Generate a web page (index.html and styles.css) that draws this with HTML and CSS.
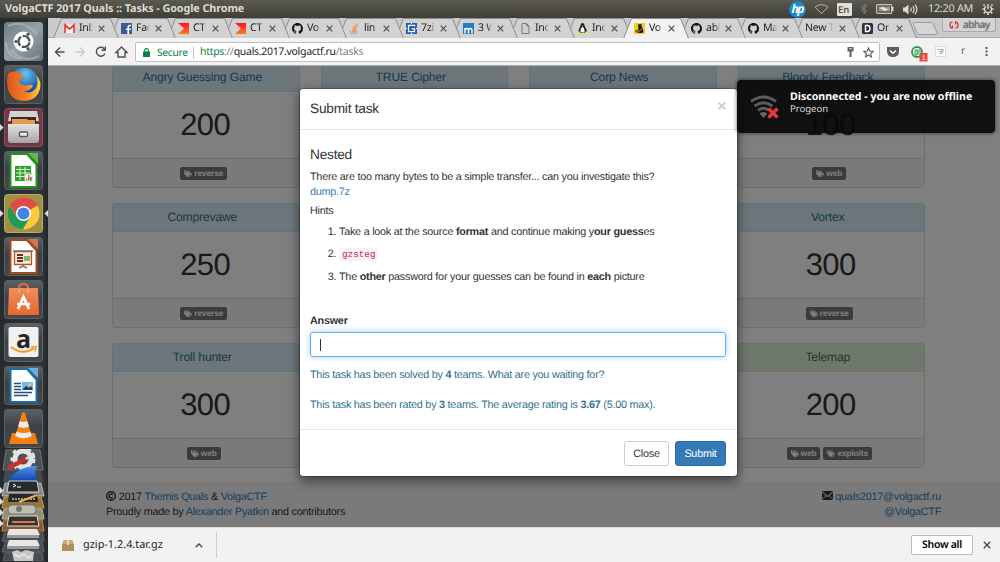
FILE: index.html
```html
<!DOCTYPE html>
<html lang="en">
<head>
<meta charset="utf-8">
<title>VolgaCTF 2017 Quals :: Tasks</title>
<link rel="stylesheet" href="styles.css">
</head>
<body>
<svg class="defs" width="0" height="0" aria-hidden="true">
  <defs>
    <linearGradient id="tileShade" x1="0" y1="0" x2="0" y2="1"><stop offset="0" stop-color="#5d6163"/><stop offset=".45" stop-color="#3c4143"/><stop offset="1" stop-color="#43484a"/></linearGradient>
    <linearGradient id="dashShade" x1="0" y1="0" x2="1" y2="1"><stop offset="0" stop-color="#6d7a80"/><stop offset=".5" stop-color="#95a2a7"/><stop offset="1" stop-color="#66747a"/></linearGradient>
    <linearGradient id="steel" x1="0" y1="0" x2="0" y2="1"><stop offset="0" stop-color="#e4e4e2"/><stop offset="1" stop-color="#a5a5a3"/></linearGradient>
    <linearGradient id="bag" x1="0" y1="0" x2="0" y2="1"><stop offset="0" stop-color="#f08d5c"/><stop offset="1" stop-color="#e6682f"/></linearGradient>
    <linearGradient id="fin" x1="0" y1="0" x2="0" y2="1"><stop offset="0" stop-color="#4f93ea"/><stop offset="1" stop-color="#0c3fae"/></linearGradient>
    <radialGradient id="globe" cx=".55" cy=".2" r=".8"><stop offset="0" stop-color="#6cc6f2"/><stop offset=".6" stop-color="#1d62ad"/><stop offset="1" stop-color="#0a2c6a"/></radialGradient>
    <linearGradient id="fox" x1="0" y1="0" x2="1" y2="0"><stop offset="0" stop-color="#e2531d"/><stop offset=".6" stop-color="#f3842a"/><stop offset="1" stop-color="#fbd340"/></linearGradient>
    <linearGradient id="volga" x1="0" y1="0" x2="0" y2="1"><stop offset="0" stop-color="#ff1030"/><stop offset="1" stop-color="#ff7a1c"/></linearGradient>
    <symbol id="tab" viewBox="0 0 66 20"><path d="M.5 20.5 8.500.5H57.500L65.500 20.500" stroke="#8e8e8e"/></symbol>
    <symbol id="x" viewBox="0 0 7 7"><path d="M.7.7 6.300 6.300M6.300.7.7 6.300" stroke="#4c4c4c" stroke-width="1.200" fill="none"/></symbol>
    <symbol id="github" viewBox="0 0 16 16"><path fill="#111" d="M8 0C3.580 0 0 3.580 0 8c0 3.540 2.290 6.530 5.470 7.590.4.070.550-.170.550-.380 0-.190-.010-.820-.010-1.490-2.010.370-2.530-.490-2.690-.940-.090-.230-.480-.940-.820-1.130-.280-.150-.680-.520-.010-.530.630-.010 1.080.580 1.230.820.720 1.210 1.870.870 2.330.660.070-.520.280-.870.510-1.070-1.780-.2-3.640-.890-3.640-3.950 0-.870.310-1.590.820-2.150-.080-.2-.360-1.020.080-2.120 0 0 .670-.210 2.200.820.640-.180 1.320-.270 2-.270s1.360.090 2 .270c1.530-1.040 2.200-.820 2.200-.820.440 1.100.160 1.920.080 2.120.510.560.820 1.270.820 2.150 0 3.070-1.870 3.750-3.650 3.950.290.250.540.730.540 1.480 0 1.070-.010 1.930-.010 2.200 0 .210.150.460.550.380A8 8 0 0 0 16 8c0-4.420-3.580-8-8-8z"/></symbol>
    <symbol id="ctf" viewBox="0 0 11 11"><path fill="url(#volga)" d="M0 0h11v11H0l6-5.500z"/></symbol>
    <symbol id="tag" viewBox="0 0 8 8"><path fill="#fff" fill-rule="evenodd" d="M0 .5h3L6.300 3.800q.4.400 0 .8L4 7q-.4.400-.8 0L0 3.500zM1.600 1.300a.7.7 0 1 0 .1 0zM4 .5h.7L7.900 3.700q.4.400 0 .8L5.500 7.200 5 6.700 7 4.200z"/></symbol>
    <symbol id="tile" viewBox="0 0 39 39"><rect x=".5" y=".5" width="38" height="38" rx="3" fill="url(#tileShade)" stroke="#5b6062"/></symbol>
    <symbol id="doc" viewBox="0 0 28 35"><path d="M0 0H20L28 9V35H0z"/><path d="M2 2H17L26 12V33H2z" fill="#fff"/></symbol>
  </defs>
</svg>

<header class="panel">
  <span class="panel-title">VolgaCTF 2017 Quals :: Tasks - Google Chrome</span>
  <div class="indicators">
    <svg class="hp" width="17" height="17" viewBox="0 0 17 17"><circle cx="8.500" cy="8.500" r="8.300" fill="#0f8fce"/><text x="2.600" y="12.200" class="hp-text">hp</text></svg>
    <svg width="15" height="12" viewBox="0 0 15 12"><path d="M7.500 10.500 1 4.200Q7.500-1 14 4.200z" fill="none" stroke="#b9b5aa"/></svg>
    <span class="lang">En</span>
    <svg width="8" height="12" viewBox="0 0 8 12"><path d="M1 3.500 6.500 8.500 4 11V1L6.500 3.500 1 8.500" fill="none" stroke="#85827a"/></svg>
    <svg width="18" height="10" viewBox="0 0 18 10"><rect x=".6" y=".6" width="15" height="8.800" rx="1" fill="none" stroke="#c9c5bc" stroke-width="1.200"/><path d="M16 3h1.500v4H16z" fill="#dfdbd2"/><path d="M2.500 2.500h11.500v5H2.500z" fill="#99958b"/><path d="M3 4 8 3l1 1.500 4 .5-5 2-1-1.500z" fill="#f5f2e9"/></svg>
    <svg width="15" height="11" viewBox="0 0 15 11"><path d="M0 3.500h2L5.500.5v10L2 7.500H0z" fill="#dfdbd2"/><path d="M7.500 3.500q1.500 2 0 4M9.700 2q2.700 3.500 0 7M11.900.7q4 4.800 0 9.600" fill="none" stroke="#dfdbd2" stroke-width="1.200"/></svg>
    <span class="clock">12:20 AM</span>
    <svg width="12" height="12" viewBox="0 0 12 12"><path d="M3.900 3.400a3.500 3.500 0 1 0 4.200 0M6 1v5" fill="none" stroke="#dfdbd2" stroke-width="1.400"/><path d="M2.600 2.600 1.500 1.500M9.400 2.600l1.100-1.100M1.800 6H.2M10.200 6h1.600M2.900 9.100l-1.200 1.200M9.100 9.100l1.200 1.200M6 10.300v1.600" stroke="#dfdbd2" stroke-width="1.700"/></svg>
  </div>
</header>

<div class="desktop">
  <nav class="launcher">
    <svg class="app" viewBox="0 0 39 39"><rect width="39" height="39" rx="3.500" fill="url(#dashShade)"/><path d="M4 4Q20-3 33 12M35 34Q20 42 7 28M2 20Q2 34 17 37" fill="none" stroke="#b4bfc3" stroke-width="2" opacity=".6"/><circle cx="19.500" cy="19.500" r="10" fill="#fff"/><circle cx="20" cy="19.500" r="5.500" fill="none" stroke="#4a4f52" stroke-width="2.200" stroke-dasharray="9.900 1.600" stroke-dashoffset="-.8"/><circle cx="12" cy="19.500" r="1.600" fill="#4a4f52"/><circle cx="24" cy="12.300" r="1.600" fill="#4a4f52"/><circle cx="24" cy="26.700" r="1.600" fill="#4a4f52"/></svg>
    <svg class="app" viewBox="0 0 39 39"><use href="#tile"/><circle cx="20" cy="18" r="15" fill="url(#globe)"/><path d="M4 9q2-3 5-2 5-2 7 2l5 3-5 2q-2 3 1 5 4 3 8 1 3-1 4 1-4 6-10 5 8 4 13-3 3-6 0-13 6 6 4 14-3 11-15 12Q7 36 4 24q-2-8 0-15z" fill="url(#fox)"/></svg>
    <div class="slot"><svg class="arrow-l" viewBox="0 0 4 7"><path d="M0 0 3.500 3.500 0 7z" fill="#ddd"/></svg><svg class="app" viewBox="0 0 39 39"><rect x=".5" y=".5" width="38" height="38" rx="3" fill="#733843" stroke="#8a505b"/><path d="M6 3h27l2 10H4z" fill="#d2d2d0"/><path d="M7 9h25v8H7z" fill="#3a2c20"/><path d="M8 11h15l1 1h7v5H8z" fill="#ec9850"/><path d="M4 16h31v16q0 3-3 3H7q-3 0-3-3z" fill="url(#steel)"/><rect x="15.500" y="24" width="8" height="4.500" rx="1" fill="#eee" stroke="#555" stroke-width="1.300"/></svg></div>
    <svg class="app" viewBox="0 0 39 39"><use href="#tile"/><use href="#doc" x="5" y="2" width="29" height="35" fill="#22941c"/><path d="M24 2h10v10z" fill="#64b752"/><path d="M11 15h16v15H11z" fill="#2da02a"/><path d="M12 18.500h14M12 22h14M12 25.500h14M16 16v13M21 16v13" stroke="#d9f3d3" stroke-width="1.100"/><path d="M21 23h7v7h-7z" fill="#fff" stroke="#aaa" stroke-width=".6"/><path d="M22 27h1.500v2.500H22z" fill="#e0a020"/><path d="M24 24h1.500v5.500H24z" fill="#e8641c"/><path d="M26 26h1.500v3.500H26z" fill="#2a74c0"/></svg>
    <div class="slot"><svg class="arrow-l" viewBox="0 0 4 7"><path d="M0 0 3.500 3.500 0 7z" fill="#ddd"/></svg><svg class="app" viewBox="0 0 39 39"><rect x=".5" y=".5" width="38" height="38" rx="3" fill="#a18f47" stroke="#bdac67"/><circle cx="19.500" cy="19.500" r="16" fill="#fbc93b"/><path d="M19.500 19.500 5.600 11.500A16 16 0 0 1 33.400 11.500z" fill="#dc4d43"/><path d="M19.500 12H33.700A16 16 0 0 0 5.800 11.200L13 23z" fill="#dc4d43"/><path d="M5.600 11.500A16 16 0 0 0 18.700 35.500L26 23.300H13z" fill="#229a58"/><circle cx="19.500" cy="19.500" r="7.600" fill="#fff"/><circle cx="19.500" cy="19.500" r="6" fill="#4482e8"/></svg><svg class="arrow-r" viewBox="0 0 4 7"><path d="M4 0 .5 3.500 4 7z" fill="#ddd"/></svg></div>
    <svg class="app" viewBox="0 0 39 39"><use href="#tile"/><use href="#doc" x="5" y="2" width="29" height="35" fill="#a8481e"/><path d="M24 2h10v10z" fill="#c97a51"/><path d="M10.500 14.500h17v13h-17z" fill="#fbe8da" stroke="#b9532a" stroke-width="1.300"/><path d="M13 18h6M13 21h6M13 24h6" stroke="#6f2d14" stroke-width="2"/><path d="M20 19h6v5h-6z" fill="#7dbb72"/><path d="M9 14h20M19 28v2M15 31l4-2 4 2" stroke="#777" stroke-width="1.500" fill="none"/></svg>
    <svg class="app" viewBox="0 0 39 39"><use href="#tile"/><path d="M15 13V8q0-4 4.500-4T24 8v5" fill="none" stroke="#db694c" stroke-width="2.200"/><path d="M5 8h29l1 26q0 1-1 1H5q-1 0-1-1z" fill="url(#bag)"/><path d="M15 13V9M24 13V9" stroke="#f7a184" stroke-width="2"/><path d="m14 29 5.500-12L25 29M13 24h13" fill="none" stroke="#fff" stroke-width="2.700"/></svg>
    <svg class="app" viewBox="0 0 39 39"><use href="#tile"/><rect x="4.500" y="4" width="30" height="30" rx="2" fill="#f1f1f1"/><text x="12" y="25" class="amazon">a</text><path d="M7 24q12 9 23 1" fill="none" stroke="#f59a24" stroke-width="2"/><path d="m27 24 5-.5-1 5" fill="none" stroke="#f59a24" stroke-width="1.500"/></svg>
    <svg class="app" viewBox="0 0 39 39"><use href="#tile"/><use href="#doc" x="5" y="2" width="29" height="35" fill="#1a6da6"/><path d="M24 2h10v10z" fill="#69aede"/><path d="M10 17.500h7M10 20.500h7M10 23.500h7M10 26.500h18M10 29.500h14" stroke="#1c4f7c" stroke-width="1.400"/><path d="M18 16h11v8H18z" fill="#76b9e8"/><path d="m18 24 4-4 3 2 2-2 2 4z" fill="#24395c"/><circle cx="26" cy="18.500" r="1.300" fill="#ffd84c"/></svg>
    <svg class="app" viewBox="0 0 39 39"><use href="#tile"/><path d="M8 24h23l3 11H5z" fill="#f47e10"/><path d="M18 4q1.500-1.500 3 0l7 24q-8 5-17 0z" fill="#f58113"/><path d="m15.700 12-1.600 5.500q5.400 2.500 10.800 0L23.300 12q-3.800 2-7.600 0zM12.600 22.500 11.200 27q8.300 4.500 16.600 0l-1.400-4.500q-6.900 3-13.800 0z" fill="#ececec"/></svg>
    <svg class="stack" width="47" height="112" viewBox="0 0 47 112">
      <path d="M6 1h34l3 20H3z" fill="#4c5153" stroke="#707476"/><circle cx="23" cy="10" r="8" fill="none" stroke="#e4e4e2" stroke-width="5"/><circle cx="23" cy="10" r="11" fill="none" stroke="#e4e4e2" stroke-width="3" stroke-dasharray="4 4"/><path d="m10 18 16-8" stroke="#c92e2c" stroke-width="4.500" stroke-linecap="round"/><path d="m26 10 8-6" stroke="#ddd" stroke-width="2.500"/>
      <path d="M5 22h36l2 11H3z" fill="#444a4d"/><path d="M7 33Q17 17 37 17q-4 8 1 16z" fill="url(#fin)"/>
      <path d="M5 34h36l3 13H2z" fill="#85878a" stroke="#b8b8b8"/><path d="M9 32h28l2 11H7z" fill="#282a2c" stroke="#d0d0d0"/><path d="m13 35 3 1.500L13 38M17 38h4" stroke="#fff" fill="none"/>
      <path d="M4 48h37l3 11H2z" fill="#957439" stroke="#c9a14e"/><path d="M9 45h28l1 8H8z" fill="#292724"/><path d="M12 50h24" stroke="#999" stroke-width="2" stroke-dasharray="2 1"/><path d="m19 53 18-7" stroke="#e8b34c" stroke-width="2"/>
      <path d="M4 60h38l2 10H2z" fill="#90907a" stroke="#bab79a"/><rect x="8" y="56" width="28" height="9" rx="4" fill="#c0bfb0" stroke="#77776b"/><circle cx="19" cy="60" r="3" fill="#73766e"/>
      <path d="M4 71h38l2 11H2z" fill="#8c592d" stroke="#c98644"/><path d="M9 67h28l2 10H7z" fill="#373231" stroke="#ddd"/><path d="M12 73h23" stroke="#dc7749" stroke-width="2"/>
      <path d="M5 82h37l2 10H2zM5 93h37l2 10H2zM5 104h37l1 8H3z" fill="#484d50" stroke="#606568"/><path d="M9 80h28l3 6H7zM9 91h28l3 6H7z" fill="#e6e6e6"/><path d="M7 86h32v3H7zM7 97h32v3H7z" fill="#9a9a9a"/><path d="m12 103 5-2 4 2 5-2 8 2-1 9H14z" fill="#c6c9c6"/><path d="m14 105 5 3 5-3 4 4 4-3" stroke="#fff" fill="none"/>
      <path d="m0 38 3.500 3.500L0 45zM0 49l3.500 3.500L0 56zM0 60l3.500 3.500L0 67zM0 71l3.500 3.500L0 78z" fill="#ddd"/>
    </svg>
  </nav>

  <main class="browser">
    <div class="tabs">
      <div class="tab"><svg class="tab-shape"><use href="#tab"/></svg><svg class="fav" viewBox="0 0 11 11"><path d="M0 1.500h11v8.500H0z" fill="#f3f3f3"/><path d="M1 10V2l4.500 4L10 2v8" fill="none" stroke="#d93f35" stroke-width="1.700"/></svg><span class="label">Inb</span><svg class="x"><use href="#x"/></svg></div>
      <div class="tab"><svg class="tab-shape"><use href="#tab"/></svg><svg class="fav" viewBox="0 0 11 11"><path d="M0 0h11v11H0z" fill="#3d5a98"/><path d="M7.200 11V6.500M10 2.500H9q-1.800 0-1.800 1.800v2M5 6.300h4.800" fill="none" stroke="#fff" stroke-width="1.600"/></svg><span class="label">Fac</span><svg class="x"><use href="#x"/></svg></div>
      <div class="tab"><svg class="tab-shape"><use href="#tab"/></svg><svg class="fav"><use href="#ctf"/></svg><span class="label">CT</span><svg class="x"><use href="#x"/></svg></div>
      <div class="tab"><svg class="tab-shape"><use href="#tab"/></svg><svg class="fav"><use href="#ctf"/></svg><span class="label">CT</span><svg class="x"><use href="#x"/></svg></div>
      <div class="tab"><svg class="tab-shape"><use href="#tab"/></svg><svg class="fav"><use href="#github"/></svg><span class="label">Vo</span><svg class="x"><use href="#x"/></svg></div>
      <div class="tab"><svg class="tab-shape"><use href="#tab"/></svg><svg class="fav" viewBox="0 0 11 11"><path d="M1.500 7v3.300h6V7" fill="none" stroke="#aaa"/><path d="M3 8.800h3.500M3 7l3.700.5M3.500 4.900l3.500 1.300M4.800 2.700l3 2.300M6.800.6l2 3.200" stroke="#f08b3c" stroke-width="1.200"/></svg><span class="label">lin</span><svg class="x"><use href="#x"/></svg></div>
      <div class="tab"><svg class="tab-shape"><use href="#tab"/></svg><svg class="fav" viewBox="0 0 11 11"><path d="M0 0h11v11H0z" fill="#1d5fa8"/><path d="M8.500 3.500V2.300h-6v6.400h6V5.800h-3" fill="none" stroke="#fff" stroke-width="1.300"/><path d="M0 5.500h1M10 5.500h1M5.500 0v1M5.500 10v1" stroke="#fff"/></svg><span class="label">7zi</span><svg class="x"><use href="#x"/></svg></div>
      <div class="tab"><svg class="tab-shape"><use href="#tab"/></svg><svg class="fav" viewBox="0 0 11 11"><path d="M0 0h11v11H0z" fill="#2e78be"/><path d="M2 10.500V5M2 7q0-1.500 1.700-1.500T5.500 7v3.500M5.500 7q0-1.500 1.700-1.500T9 7v3.500" fill="none" stroke="#fff" stroke-width="1.400"/></svg><span class="label">3 W</span><svg class="x"><use href="#x"/></svg></div>
      <div class="tab"><svg class="tab-shape"><use href="#tab"/></svg><svg class="fav" viewBox="0 0 11 11"><path d="M2 .5h4.500L9 3v7.500H2zM6.500.5V3H9" fill="none" stroke="#777"/></svg><span class="label">Inc</span><svg class="x"><use href="#x"/></svg></div>
      <div class="tab"><svg class="tab-shape"><use href="#tab"/></svg><svg class="fav" viewBox="0 0 11 11"><path d="M5.500 0q2 0 2 2.500 0 1 1.500 3.200T9.500 10h-8Q1 8 2.200 5.700 3.600 3.500 3.500 2.500 3.500 0 5.500 0z" fill="#151515"/><path d="M5.500 3.500q3 3 1.800 6H3.800q-1.400-3 1.700-6z" fill="#fff"/><path d="M0 9.500 2 8l2 2.500-1.500.5zM11 9.500 9 8l-2 2.500 1.500.5zM4.500 2.600h2l-1 1z" fill="#f2e319"/></svg><span class="label">Inc</span><svg class="x"><use href="#x"/></svg></div>
      <div class="tab tab-active"><svg class="tab-shape"><use href="#tab"/></svg><svg class="fav" viewBox="0 0 11 11"><path d="M0 0h11v11H0z" fill="#f8cb1c"/><path d="M4 1.500 7.500 1Q7 3.500 8.500 5.500L9.500 8l-1 2H5.500L1.500 9l-.5-1.500 3.500-1z" fill="#1c1a14"/><path d="M1.500 8 5 8.200 8 6" fill="none" stroke="#f8cb1c" stroke-width=".8"/></svg><span class="label">Vo</span><svg class="x"><use href="#x"/></svg></div>
      <div class="tab"><svg class="tab-shape"><use href="#tab"/></svg><svg class="fav"><use href="#github"/></svg><span class="label">abl</span><svg class="x"><use href="#x"/></svg></div>
      <div class="tab"><svg class="tab-shape"><use href="#tab"/></svg><svg class="fav"><use href="#github"/></svg><span class="label">Ma</span><svg class="x"><use href="#x"/></svg></div>
      <div class="tab"><svg class="tab-shape"><use href="#tab"/></svg><span class="label label-wide">New T</span><svg class="x"><use href="#x"/></svg></div>
      <div class="tab"><svg class="tab-shape"><use href="#tab"/></svg><svg class="fav" viewBox="0 0 11 11"><rect width="11" height="11" rx="1.500" fill="#2c3040"/><path d="M3.500 2.500h2q2.500 0 2.500 3t-2.500 3h-2z" fill="none" stroke="#fff" stroke-width="1.400"/></svg><span class="label">Or</span><svg class="x"><use href="#x"/></svg></div>
      <svg class="new-tab" width="26" height="13" viewBox="0 0 26 13"><path d="M2 .5h17.500q1 0 1.500 1l4 9q.5 2-1 2H7q-1 0-1.500-1l-4-9q-.5-2 .5-2z" fill="#d6d6d6" stroke="#9c9c9c"/></svg>
      <div class="profile"><svg width="10" height="8" viewBox="0 0 10 8"><path d="M3.500 1Q1 1 1 4t2.500 3V4.500M3.500 7H2M6.500 7Q9 7 9 4T6.500 1v2.500M6.500 1H8" fill="none" stroke="#d9302c" stroke-width="1.200"/></svg><span>abhay</span></div>
    </div>

    <div class="toolbar">
      <svg width="80" height="14" viewBox="0 0 80 14"><g fill="none" stroke="#505050" stroke-width="1.400"><path d="M10.500 7H1.500M6 2.500 1.500 7 6 11.500"/><path d="M21.500 7h9M26 2.500 30.500 7 26 11.500" stroke="#ccc"/><path d="M50.500 4A4.500 4.500 0 1 0 51 8.500M51.300 1.500v3.700h-3.700"/><path d="M62 7.500 67.500 2 73 7.500h-2V12h-7V7.500z"/></g></svg>
      <div class="omnibox">
        <svg width="7" height="9" viewBox="0 0 7 9"><path d="M0 3.500h7V9H0z" fill="#0b8043"/><path d="M1.700 4V2.300q0-1.600 1.800-1.600t1.800 1.600V4" fill="none" stroke="#0b8043" stroke-width="1.200"/></svg>
        <span class="secure">Secure</span><i class="bar"></i><span class="url"><b>https</b>://<em>quals.2017.volgactf.ru</em>/tasks</span>
        <svg class="key" width="7" height="10" viewBox="0 0 7 10"><path d="M.5 0h6v4.500h-2V10h-2V4.500h-2z" fill="#616161"/><path d="M2.500 1.700h2" stroke="#fff"/></svg>
        <svg width="11" height="11" viewBox="0 0 11 11"><path d="m5.500 1 1.300 3.100 3.400.3-2.600 2.200.8 3.300-2.900-1.800-2.900 1.800.8-3.300L.8 4.400l3.400-.3z" fill="none" stroke="#555" stroke-width="1.100"/></svg>
      </div>
      <div class="extensions">
        <svg width="12" height="10" viewBox="0 0 12 10"><path d="M0 0h12v4q0 6-6 6T0 4z" fill="#5c5c5c"/><path d="m3 3.500 3 2.700 3-2.700" fill="none" stroke="#fff" stroke-width="1.500"/></svg>
        <svg width="17" height="16" viewBox="0 0 17 16"><circle cx="6" cy="6" r="5" fill="#fff" stroke="#2c9a48" stroke-width="1.800"/><path d="M4 9V4h2v5zM7 9V4h2v3" fill="none" stroke="#2c9a48"/><path d="M8.500 7h8v8.500h-8z" fill="#e84b3c"/><text x="10.800" y="14" class="badge">1</text></svg>
        <svg width="11" height="11" viewBox="0 0 11 11"><rect x=".5" y=".5" width="10" height="10" fill="#f8f8f8" stroke="#ddd"/><path d="M2.500 3.500h5.500q0 3-3 4.500M4 5.500h3" fill="none" stroke="#aaa" stroke-width="1.200"/></svg>
        <span class="r">r</span>
        <svg width="3" height="11" viewBox="0 0 3 11"><path d="M.5 1h2v2h-2zM.5 4.500h2v2h-2zM.5 8h2v2h-2z" fill="#5a5a5a"/></svg>
      </div>
    </div>

    <div class="viewport">
      <div class="page">
        <div class="grid">
          <article class="card"><h3>Angry Guessing Game</h3><div class="points">200</div><footer><span class="label-tag"><svg><use href="#tag"/></svg>reverse</span></footer></article>
          <article class="card"><h3>TRUE Cipher</h3><div class="points"></div><footer></footer></article>
          <article class="card"><h3>Corp News</h3><div class="points"></div><footer></footer></article>
          <article class="card"><h3>Bloody Feedback</h3><div class="points">100</div><footer><span class="label-tag"><svg><use href="#tag"/></svg>web</span></footer></article>
          <article class="card"><h3>Comprevawe</h3><div class="points">250</div><footer><span class="label-tag"><svg><use href="#tag"/></svg>reverse</span></footer></article>
          <article class="card card-right"><h3>Vortex</h3><div class="points">300</div><footer><span class="label-tag"><svg><use href="#tag"/></svg>reverse</span></footer></article>
          <article class="card"><h3>Troll hunter</h3><div class="points">300</div><footer><span class="label-tag"><svg><use href="#tag"/></svg>web</span></footer></article>
          <article class="card card-right card-solved"><h3>Telemap</h3><div class="points">200</div><footer><span class="label-tag"><svg><use href="#tag"/></svg>web</span><span class="label-tag"><svg><use href="#tag"/></svg>exploits</span></footer></article>
        </div>
        <div class="site-footer">
          <div><p><svg class="copy" viewBox="0 0 10 10"><circle cx="5" cy="5" r="4.300" fill="none" stroke="#333" stroke-width="1.400"/><path d="M6.800 4A2 2 0 1 0 6.800 6" fill="none" stroke="#333" stroke-width="1.400"/></svg> 2017 <a>Themis Quals</a> &amp; <a>VolgaCTF</a></p><p>Proudly made by <a>Alexander Pyatkin</a> and contributors</p></div>
          <div class="contact"><p><svg class="mail" viewBox="0 0 11 9"><path d="M0 0h11L5.500 5zM0 1.200 3.500 4.500 0 8zM11 1.200 7.500 4.500 11 8zM0 9l4-4 1.500 1.300L7 5l4 4z" fill="#333"/></svg> <a>quals2017@volgactf.ru</a></p><p><a>@VolgaCTF</a></p></div>
        </div>
      </div>
      <div class="backdrop">
        <section class="modal">
          <div class="modal-header"><h4>Submit task</h4><span class="close">×</span></div>
          <div class="modal-body">
            <h4>Nested</h4>
            <p class="desc">There are too many bytes to be a simple transfer... can you investigate this?<br><a>dump.7z</a></p>
            <p class="hints">Hints</p>
            <ol>
              <li>Take a look at the source <b>format</b> and continue making y<b>our guess</b>es</li>
              <li><code>gzsteg</code></li>
              <li>The <b>other</b> password for your guesses can be found in <b>each</b> picture</li>
            </ol>
            <div class="answer-label">Answer</div>
            <div class="answer"><i></i></div>
            <p class="info">This task has been solved by <b>4</b> teams. What are you waiting for?</p>
            <p class="info">This task has been rated by <b>3</b> teams. The average rating is <b>3.67</b> (5.00 max).</p>
          </div>
          <div class="modal-footer"><span class="btn">Close</span><span class="btn btn-primary">Submit</span></div>
        </section>
      </div>
    </div>

    <div class="downloads">
      <svg width="12" height="11" viewBox="0 0 12 11"><path d="M1.500 0h9L12 4v6q0 1-1 1H1q-1 0-1-1V4z" fill="#c8a878"/><path d="M0 4h12v6q0 1-1 1H1q-1 0-1-1z" fill="#b08d5b"/><path d="M5 0h2v5H5z" fill="#e6d5b5"/></svg>
      <span class="file">gzip-1.2.4.tar.gz</span>
      <svg class="chev" width="8" height="5" viewBox="0 0 8 5"><path d="M.7 4.300 4 1l3.300 3.300" fill="none" stroke="#444" stroke-width="1.300"/></svg>
      <i class="sep"></i>
      <span class="show-all">Show all</span>
      <svg width="8" height="8" viewBox="0 0 8 8"><path d="m.8.8 6.400 6.400m0-6.400L.8 7.200" stroke="#444" stroke-width="1.300"/></svg>
    </div>
  </main>
</div>

<aside class="notice">
  <svg width="30" height="26" viewBox="0 0 30 26"><g fill="none" stroke="#5c5c5c" stroke-width="2.800"><path d="M1 6.500q12.500-9 25 0"/><path d="M4.500 11q9-6.500 18 0"/><path d="M8 15.300q5.500-4 11 0"/></g><path d="m13.500 23-4-4.500q4-3 8 0z" fill="#666"/><path d="m18.500 13.500 9 9m0-9-9 9" stroke="#e8393a" stroke-width="3.400"/></svg>
  <div><strong>Disconnected - you are now offline</strong><span>Progeon</span></div>
</aside>
</body>
</html>
```
FILE: styles.css
```css
* { box-sizing: border-box; }
body {
  margin: 0; width: 1000px; height: 562px; overflow: hidden;
  display: flex; flex-direction: column; position: relative;
  font: 10.25px/14.64px "Liberation Sans", Arial, sans-serif;
  color: #333; text-rendering: geometricPrecision;
}
p, h3, h4, ol { margin: 0; font-weight: 400; }
a { color: #337ab7; }
svg { flex: none; display: block; }
.defs { position: absolute; }

/* Top panel */
.panel {
  height: 18px; flex: none; display: flex; align-items: center; justify-content: space-between;
  padding: 0 6px 0 5px; background: linear-gradient(#5b5950, #3f3e39);
  font: 10.8px/18px "Noto Sans", sans-serif; color: #dfdbd2;
}
.panel-title { font-weight: 700; font-size: 10.800px; letter-spacing: -.09px; }
.indicators { display: flex; align-items: center; }
.hp { margin-right: 8px; }
.hp-text { font: italic bold 12px "Open Sans", sans-serif; fill: #fff; letter-spacing: -1.500px; }
.lang { background: #e4e0d8; color: #55534c; font-size: 9.500px; font-weight: 600; line-height: 13px; padding: 0 1px; border-radius: 1px; margin: 0 8px; width: 15px; }
.indicators > svg:nth-of-type(3) { margin-right: 8px; }
.indicators > svg:nth-of-type(4) { margin-right: 9px; }
.clock { margin: 0 9px 0 10px; width: 45px; white-space: nowrap; letter-spacing: -.25px; }

.desktop { flex: 1; display: flex; min-height: 0; }

/* Launcher */
.launcher {
  width: 48px; flex: none; display: flex; flex-direction: column; align-items: center; gap: 4px;
  padding: 4px 1px 0 0; background: linear-gradient(90deg, #252b2e, #2e3437 90%, #202527); overflow: hidden;
}
.app { width: 39px; height: 39px; }
.slot { position: relative; }
.arrow-l, .arrow-r { position: absolute; top: 16px; width: 4px; height: 7px; }
.arrow-l { left: -4px; }
.arrow-r { right: -5px; }
.stack { margin-top: -3px; }
.amazon { font: bold 25px "Open Sans", sans-serif; fill: #262626; }

/* Browser */
.browser { flex: 1; display: flex; flex-direction: column; min-width: 0; font-family: "Noto Sans", sans-serif; }
.tabs { height: 20px; flex: none; display: flex; background: #cacaca; padding-left: 5px; border-bottom: 1px solid #aaa; }
.tab { position: relative; width: 66px; height: 20px; margin-right: -9px; flex: none; display: flex; align-items: center; padding-left: 11px; z-index: 1; }
.tab:nth-child(1) { z-index: 20; } .tab:nth-child(2) { z-index: 19; } .tab:nth-child(3) { z-index: 18; }
.tab:nth-child(4) { z-index: 17; } .tab:nth-child(5) { z-index: 16; } .tab:nth-child(6) { z-index: 15; }
.tab:nth-child(7) { z-index: 14; } .tab:nth-child(8) { z-index: 13; } .tab:nth-child(9) { z-index: 12; }
.tab:nth-child(10) { z-index: 11; } .tab:nth-child(11) { z-index: 30; } .tab:nth-child(12) { z-index: 9; }
.tab:nth-child(13) { z-index: 8; } .tab:nth-child(14) { z-index: 7; } .tab:nth-child(15) { z-index: 6; }
.tab-shape { position: absolute; left: 0; top: 0; width: 66px; height: 20px; fill: #d2d2d2; }
.tab-active .tab-shape { fill: #f2f2f2; }
.fav { position: relative; width: 11px; height: 11px; margin-right: 4px; }
.label { position: relative; width: 14px; height: 15px; line-height: 15px; margin-right: 5px; overflow: hidden; white-space: nowrap; color: #222; font-size: 10.600px; letter-spacing: -.3px; -webkit-mask: linear-gradient(90deg, #000 65%, transparent); mask: linear-gradient(90deg, #000 65%, transparent); }
.label-wide { width: 29px; }
.x { position: relative; width: 7px; height: 7px; }
.new-tab { margin: 4px 0 0 4px; }
.profile { margin: 0 4px 0 auto; height: 14px; width: 54px; border: 1px solid #a8a8a8; border-top: 0; border-radius: 0 0 3px 3px; display: flex; align-items: center; gap: 4px; padding-left: 6px; color: #777; font-size: 10px; background: #d4d4d4; text-shadow: 0 0 1px #555; }
.profile span { letter-spacing: -.4px; }

.toolbar { height: 28px; flex: none; display: flex; align-items: center; background: #f2f2f2; border-bottom: 1px solid #aaa; padding-left: 6px; }
.omnibox { margin-left: 1px; width: 745px; height: 20px; border: 1px solid #c0c0c0; border-radius: 2px; background: #fff; display: flex; align-items: center; padding: 1px 5px 0 7px; }
.secure { color: #0b8043; margin-left: 7px; width: 31px; font-size: 10.2px; letter-spacing: -.25px; white-space: nowrap; }
.bar { width: 1px; height: 11px; background: #bbb; margin: 0 6px 0 5px; }
.url { color: #808080; font-size: 10.500px; letter-spacing: -.31px; }
.url b { color: #0b8043; font-weight: 400; }
.url em { color: #222; font-style: normal; }
.key { margin: 0 9px 0 auto; }
.extensions { flex: 1; display: flex; align-items: center; padding-left: 7px; }
.extensions > :nth-child(2) { margin: 4px 7px 0 12px; }
.badge { font: 7px "Liberation Sans", sans-serif; fill: #fff; }
.r { margin: 0 20px 0 15px; color: #555; }

/* Task page */
.viewport { flex: 1; position: relative; overflow: hidden; background: #fff; font: 10.800px/14.640px "Liberation Sans", Arial, sans-serif; letter-spacing: -.235px; }
.page { height: 100%; display: flex; flex-direction: column; }
.grid { margin: -3px 0 0 64px; width: 813px; display: grid; grid-template-columns: repeat(4, 187.500px); column-gap: 21px; row-gap: 15px; grid-auto-rows: 125px; }
.card { border: 1px solid #bce8f1; border-radius: 3px; display: flex; flex-direction: column; overflow: hidden; text-align: center; }
.card-right { grid-column: 4; }
.card h3 { background: #d9edf7; color: #31708f; border-bottom: 1px solid #bce8f1; height: 28px; font-size: 12.100px; letter-spacing: -.15px; line-height: 27px; padding-right: 7px; }
.points { flex: 1; font-size: 31px; letter-spacing: -.5px; line-height: 66px; padding-right: 1px; }
.card footer { height: 30px; background: #f5f5f5; border-top: 1px solid #ddd; display: flex; align-items: center; justify-content: center; gap: 3px; padding: 1px 4px 0 0; }
.card-solved, .card-solved h3 { border-color: #d6e9c6; }
.card-solved h3 { background: #dff0d8; color: #3c763d; }
.label-tag { display: flex; align-items: center; gap: 2px; background: #777; color: #fff; font-size: 8.300px; letter-spacing: -.1px; font-weight: 700; line-height: 13px; height: 13px; padding: 0 4px; border-radius: 2px; }
.label-tag svg { width: 8px; height: 8px; }
.site-footer { margin-top: 14px; flex: 1; background: #f5f5f5; display: flex; justify-content: space-between; padding: 8px 59px 0 58px; }
.contact { text-align: right; }
.copy, .mail { display: inline-block; width: 10px; height: 10px; vertical-align: -1px; }
.mail { width: 11px; height: 9px; vertical-align: 0; }

.backdrop { position: absolute; inset: 0; background: rgba(0, 0, 0, .5); padding: 22px 0 0 250.500px; }
.modal { width: 439px; height: 389px; background: #fff; border: 1px solid rgba(0, 0, 0, .2); background-clip: padding-box; border-radius: 4px; box-shadow: 0 4px 11px rgba(0, 0, 0, .5); display: flex; flex-direction: column; }
.modal h4 { font-size: 13.700px; letter-spacing: -.23px; line-height: 15px; }
.modal-header { height: 41px; border-bottom: 1px solid #e5e5e5; padding: 12px 10.500px 0; display: flex; justify-content: space-between; }
.close { font: bold 15.400px/11px "Liberation Sans", sans-serif; color: #ccc; }
.modal-body { flex: 1; padding: 17px 10.500px 0; white-space: nowrap; }
.desc { margin-top: 8px; }
.hints { margin-top: 5px; }
.modal ol { margin-top: 6px; padding-left: 29px; }
.modal li { margin-bottom: 7.800px; }
code { font: 9.300px/14px "Liberation Mono", monospace; letter-spacing: 0; color: #c7254e; background: #f9f2f4; border-radius: 3px; padding: 1px 3px; }
.answer-label { font-weight: 700; margin-top: 29px; }
.answer { height: 25px; margin-top: 4px; border: 1px solid #66afe9; border-radius: 3px; box-shadow: 0 0 6px rgba(102, 175, 233, .6); padding: 6px 9px; }
.answer i { display: block; width: 1px; height: 12px; background: #333; }
.info { color: #31708f; margin: 11px 0 15px; }
.modal-footer { height: 47px; border-top: 1px solid #e5e5e5; display: flex; justify-content: flex-end; gap: 6px; padding: 11px 10.500px; }
.btn { height: 25px; width: 45px; border: 1px solid #ccc; border-radius: 3px; line-height: 24px; text-align: center; }
.btn-primary { width: 51px; background: #337ab7; border-color: #2e6da4; color: #fff; }

/* Download shelf */
.downloads { height: 35px; flex: none; background: #f2f2f2; border-top: 1px solid #ddd; display: flex; align-items: center; padding: 0 9px 0 14px; color: #222; }
.file { margin-left: 9px; width: 80px; white-space: nowrap; font-size: 10.900px; }
.chev { margin-left: 32px; }
.sep { width: 1px; height: 26px; background: #ccc; margin: 0 auto 0 13px; }
.show-all { width: 62px; height: 20px; line-height: 18px; text-align: center; border: 1px solid #bbb; border-radius: 2px; background: #fff; color: #000; font-weight: 600; font-size: 10.500px; letter-spacing: -.3px; margin-right: 10px; }

/* Desktop notification */
.notice { position: absolute; left: 737px; top: 80px; width: 258px; height: 53px; background: rgba(8, 8, 8, .93); border-radius: 4px; box-shadow: 0 0 4px rgba(0, 0, 0, .6); display: flex; padding: 13px 0 0 13px; gap: 10px; color: #fff; font: 9.500px/12px "Noto Sans", sans-serif; z-index: 40; }
.notice > svg { margin-top: 2px; }
.notice div { display: flex; flex-direction: column; margin-top: -2px; white-space: nowrap; }
.notice strong { font-size: 10.600px; }
.notice span { color: #ddd; }
```
